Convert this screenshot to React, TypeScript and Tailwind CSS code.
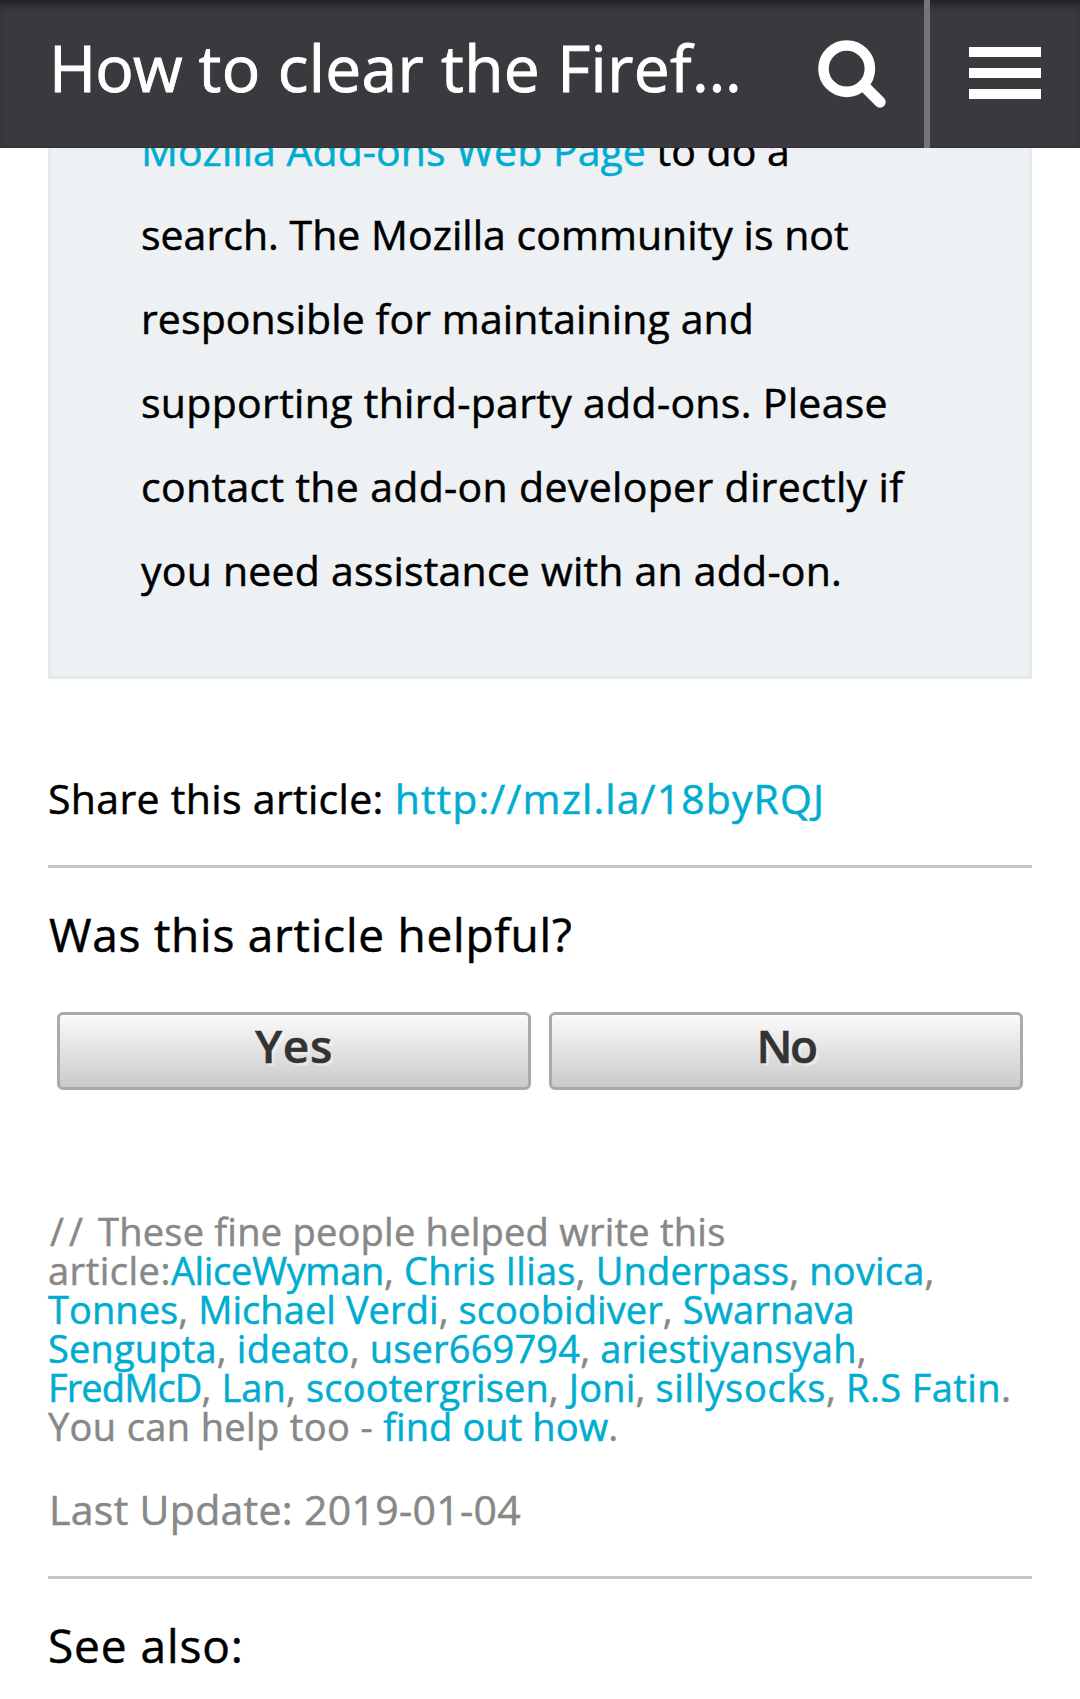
import type { ReactNode } from 'react';

function Link({ children, className = '' }: { children: ReactNode; className?: string }) {
  return (
    <a href="#" className={`text-[#00acd0] ${className}`}>
      {children}
    </a>
  );
}

function Line({ children, className }: { children: ReactNode; className: string }) {
  return <span className={`block whitespace-pre ${className}`}>{children}</span>;
}

function Names({ names }: { names: string[] }) {
  return (
    <>
      {names.map((name, i) => (
        <span key={name}>
          {i > 0 && ', '}
          <Link>{name}</Link>
        </span>
      ))}
    </>
  );
}

function Header() {
  return (
    <header className="relative z-10 flex h-[148px] bg-[#3a393e] text-white shadow-[inset_0_9px_9px_-5px_#1d1c22,inset_0_-1px_0_#302f34]">
      <h1 className="ml-[49px] w-[751px] text-[64px] leading-[135px] font-normal tracking-[0.38px] whitespace-pre [-webkit-text-stroke:0.9px]">
        <span className="tracking-[-0.9px]">How</span> to clear the Firef…
      </h1>
      <button className="flex w-[124px] items-start pt-9 pl-[14px]" aria-label="Search">
        <svg width="80" height="80" viewBox="0 0 80 80" fill="none" stroke="#fff">
          <circle cx="32.7" cy="32.7" r="23.2" strokeWidth="10.6" />
          <path d="M49.5 49.5 66 66" strokeWidth="11.4" strokeLinecap="round" />
        </svg>
      </button>
      <div className="w-[6px] bg-[#757478]" />
      <button className="flex flex-1 flex-col items-start gap-[11px] pt-[47px] pl-[39px]" aria-label="Menu">
        <span className="h-[10px] w-[72px] bg-white" />
        <span className="h-[10px] w-[72px] bg-white" />
        <span className="h-[10px] w-[72px] bg-white" />
      </button>
    </header>
  );
}

function VoteButton({ children, className }: { children: string; className: string }) {
  return (
    <button
      className={`h-[78px] w-[474px] rounded-[6px] border-[3px] border-[#aaa] bg-linear-to-b from-[#fbfbfb] to-[#cacaca] text-center align-top font-semibold text-[#333] [text-shadow:3px_3px_0_rgba(255,255,255,0.4)] ${className}`}
    >
      <span className="block h-[72px] leading-[61px]">{children}</span>
    </button>
  );
}

export default function App() {
  return (
    <div className="h-[1699px] w-[1080px] overflow-hidden bg-white font-['Open_Sans',sans-serif] text-black [-webkit-text-stroke:0.5px]">
      <Header />
      <main className="px-12">
        <p className="-mt-10 border-[3px] border-t-0 border-[#e3ebed] bg-[#eef1f4] pb-16 pl-[90px] text-[41px] leading-[84px]">
          <Line className="tracking-[0.04px]">
            <Link>Mozilla Add-ons Web Page</Link> to do a
          </Line>
          <Line className="tracking-[0.03px]">search. The Mozilla community is not</Line>
          <Line className="tracking-[0.11px]">responsible for maintaining and</Line>
          <Line className="tracking-[0.31px]">supporting third-party add-ons. Please</Line>
          <Line className="tracking-[0.33px]">contact the add-on developer directly if</Line>
          <Line className="tracking-[0.22px]">you need assistance with an add-on.</Line>
        </p>

        <p className="mt-[77px] text-[41px] leading-[84px] tracking-[0.33px] whitespace-pre">
          Share this article: <Link className="tracking-[1.09px]">http://mzl.la/18byRQJ</Link>
        </p>
        <hr className="mt-[25px] border-t-[3px] border-[#c6c6c6]" />

        <h2 className="mt-[39px] pl-[1px] text-[46px] leading-[54px] font-normal tracking-[0.75px]">
          Was this article helpful?
        </h2>
        <div className="mt-[51px] flex gap-[18px] pl-[9px]">
          <VoteButton className="text-[46px] tracking-[0.6px]">Yes</VoteButton>
          <VoteButton className="text-[46px] tracking-[-2.6px]">No</VoteButton>
        </div>

        <p className="mt-[122px] text-[38px] leading-[39px] text-[#888]">
          <Line className="pl-[2px] tracking-[0.24px]">
            <span className="tracking-[5px]">//</span> These fine people helped write this
          </Line>
          <Line className="tracking-[0.2px]">
            <span className="tracking-[0.5px]">article:</span>
            <Link className="tracking-[-0.35px]">AliceWyman</Link>, <Names names={['Chris Ilias', 'Underpass', 'novica']} />,
          </Line>
          <Line className="tracking-[0.07px]">
            <Names names={['Tonnes', 'Michael Verdi', 'scoobidiver', 'Swarnava']} />
          </Line>
          <Line className="tracking-[0.18px]">
            <Names names={['Sengupta', 'ideato', 'user669794', 'ariestiyansyah']} />,
          </Line>
          <Line className="tracking-[0.14px]">
            <Link className="tracking-[-0.9px]">FredMcD</Link>, <Names names={['Lan', 'scootergrisen', 'Joni']} />,{' '}
            <Link className="tracking-[0.75px]">sillysocks</Link>, <Link className="tracking-[0.4px]">R.S Fatin</Link>.
          </Line>
          <Line className="tracking-[0.36px]">
            You can help too - <Link className="tracking-[0.08px]">find out how</Link>.
          </Line>
        </p>

        <p className="mt-[21px] pl-px text-[41px] leading-[84px] tracking-[0.31px] text-[#888]">
          Last Update: 2019-01-04
        </p>
        <hr className="mt-[25px] border-t-[3px] border-[#c6c6c6]" />

        <h2 className="mt-[39px] text-[46px] leading-[54px] font-normal tracking-[0.9px]">See also:</h2>
      </main>
    </div>
  );
}
